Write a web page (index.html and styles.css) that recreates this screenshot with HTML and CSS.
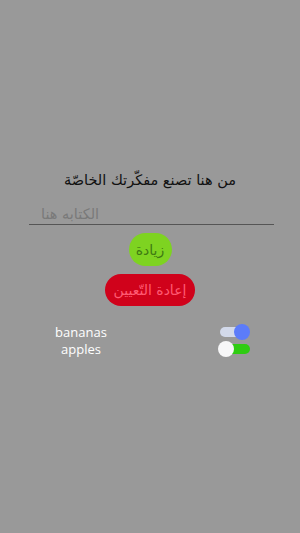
FILE: index.html
```html
<!DOCTYPE html>
<html lang="ar">
<head>
    <meta charset="UTF-8">
    <meta name="viewport" content="width=device-width, initial-scale=1.0">
    <title>مفكرة</title>
    <link rel="stylesheet" href="styles.css">
</head>
<body>
    <main class="app">
        <h1 class="title">من هنا تصنع مفكّرتك الخاصّة</h1>
        <input type="text" class="note_input" placeholder="الكتابه هنا" dir="ltr">
        <button class="btn btn_add">زيادة</button>
        <button class="btn btn_reset">إعادة التّعيين</button>
        <ul class="list">
            <li class="item">
                <span class="item_label">bananas</span>
                <span class="switch on"></span>
            </li>
            <li class="item">
                <span class="item_label">apples</span>
                <span class="switch"></span>
            </li>
        </ul>
    </main>
</body>
</html>
```

FILE: styles.css
```css
* {
    margin: 0;
    padding: 0;
    box-sizing: border-box;
}
body {
    min-height: 100vh;
    background-color: #999999;
    font-family: 'DejaVu Sans', 'Open Sans', sans-serif;
}
.app {
    display: flex;
    flex-direction: column;
    align-items: center;
    padding-top: 170px;
}
.title {
    font-size: 14.5px;
    font-weight: normal;
    line-height: 20px;
    color: #111;
}
.note_input {
    align-self: stretch;
    margin: 14px 26px 0 29px;
    height: 21px;
    padding: 0 12px;
    border: none;
    border-bottom: 1px solid #555;
    background: transparent;
    outline: none;
    font-family: 'DejaVu Sans', sans-serif;
    font-size: 14.5px;
    color: #222;
}
.note_input::placeholder {
    color: #7a7a7a;
}
.btn {
    border: none;
    border-radius: 17px;
    font-family: 'DejaVu Sans', sans-serif;
    font-size: 14px;
    cursor: pointer;
}
.btn_add {
    margin-top: 8px;
    width: 43px;
    height: 33px;
    background-color: #7ed321;
    color: #3f7a12;
}
.btn_reset {
    margin-top: 8px;
    width: 90px;
    height: 32px;
    background-color: #d0021b;
    color: #ff5b73;
}
.list {
    list-style: none;
    align-self: stretch;
    margin: 17px 50px 0 40px;
}
.item {
    display: grid;
    grid-template-columns: 82px 1fr;
    align-items: center;
    height: 17px;
}
.item_label {
    text-align: center;
    font-family: 'Open Sans', sans-serif;
    font-size: 13px;
    color: #fff;
}
.switch {
    justify-self: end;
    position: relative;
    width: 32px;
    height: 16px;
}
.switch::before {
    content: "";
    position: absolute;
    left: 2px;
    right: 0;
    top: 3px;
    height: 10px;
    border-radius: 5px;
    background-color: #2fcc12;
}
.switch::after {
    content: "";
    position: absolute;
    left: 0;
    top: 0;
    width: 16px;
    height: 16px;
    border-radius: 50%;
    background-color: #f7f7f8;
}
.switch.on::before {
    left: 2px;
    right: 4px;
    background-color: #d2d9ea;
}
.switch.on::after {
    left: auto;
    right: 0;
    background-color: #5c7cfa;
}
```
